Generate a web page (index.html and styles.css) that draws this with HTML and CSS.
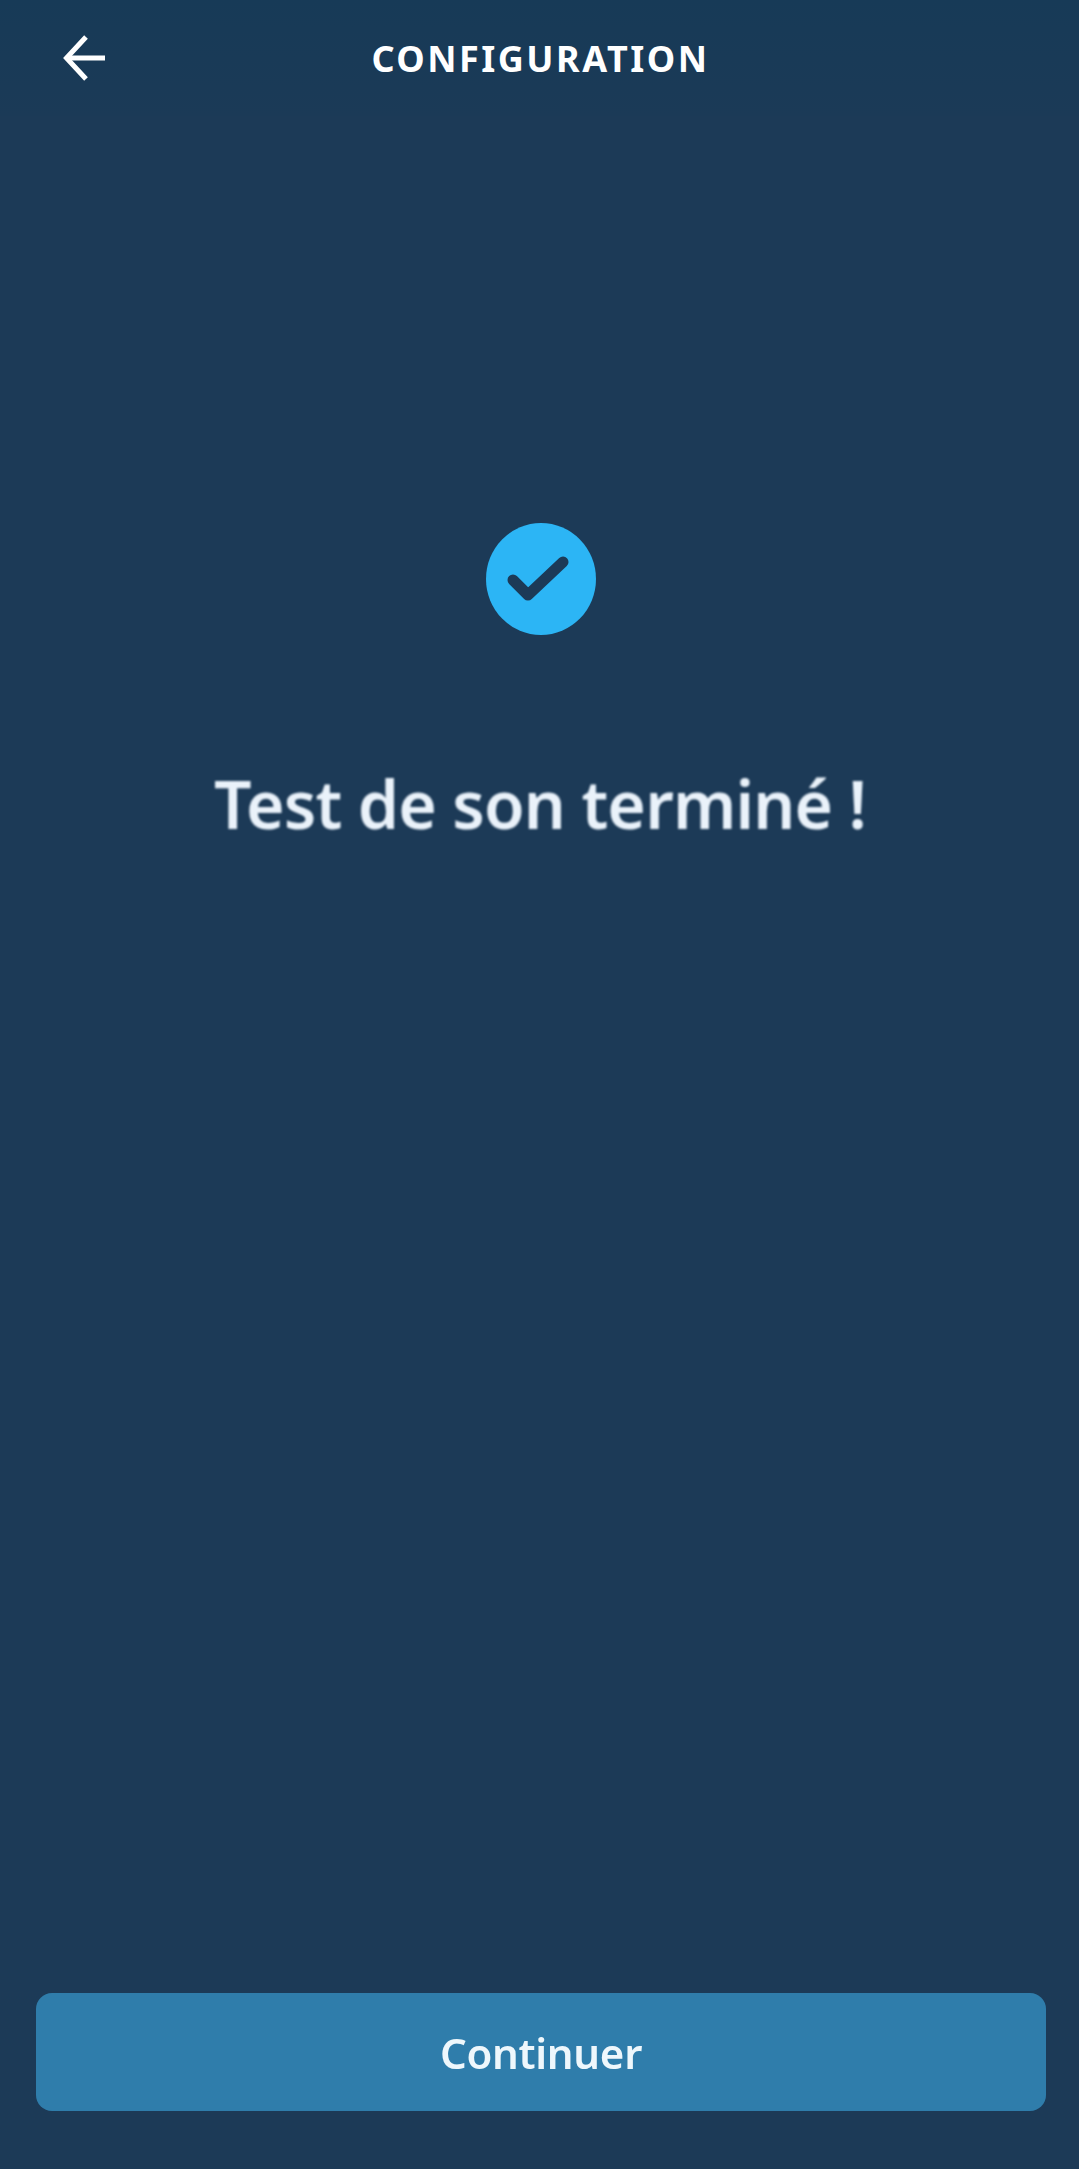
FILE: index.html
```html
<!DOCTYPE html>
<html lang="fr">
<head>
    <meta charset="UTF-8">
    <meta name="viewport" content="width=device-width, initial-scale=1.0">
    <title>Configuration</title>
    <link rel="stylesheet" href="styles.css">
</head>
<body>
    <div class="screen">
        <header class="top-bar">
            <button class="back-button" aria-label="Retour">
                <svg width="46" height="46" viewBox="0 0 46 46" fill="none" stroke="#ffffff" stroke-width="5">
                    <path d="M43 23H6"/>
                    <path d="M24 2L4.5 23L24 44"/>
                </svg>
            </button>
            <h1 class="top-title">CONFIGURATION</h1>
        </header>

        <main class="content">
            <div class="check-circle">
                <svg width="80" height="70" viewBox="0 0 80 70" fill="none" stroke="#1c3a57" stroke-width="11" stroke-linecap="round" stroke-linejoin="round">
                    <path d="M12 36L27 51L62 18"/>
                </svg>
            </div>
            <h2 class="result-title">Test de son terminé !</h2>
        </main>

        <footer class="actions">
            <button class="continue-button"><span class="continue-label">Continuer</span></button>
        </footer>
    </div>
</body>
</html>
```

FILE: styles.css
```css
* {
    box-sizing: border-box;
}

body {
    margin: 0;
    padding: 0;
    background-color: #1c3a57;
    font-family: "Noto Sans", "Open Sans", sans-serif;
    color: #ffffff;
}

.screen {
    display: flex;
    flex-direction: column;
    height: 100vh;
}

.top-bar {
    display: flex;
    justify-content: center;
    align-items: center;
    position: relative;
    height: 116px;
    background: linear-gradient(#173a57, #1b3a57);
}

.back-button {
    position: absolute;
    left: 62px;
    top: 35px;
    display: flex;
    padding: 0;
    border: none;
    background: none;
}

.top-title {
    margin: 0 0 0 2px;
    font-size: 36px;
    font-weight: 700;
    letter-spacing: 2.5px;
}

.content {
    flex: 1;
    display: flex;
    flex-direction: column;
    align-items: center;
    padding-top: 407px;
}

.check-circle {
    display: flex;
    justify-content: center;
    align-items: center;
    width: 110px;
    height: 112px;
    margin-left: 3px;
    border-radius: 50%;
    background-color: #2cb5f5;
    filter: blur(0.6px);
}

.result-title {
    margin: 122px 0 0 1px;
    font-size: 66px;
    line-height: 92px;
    font-weight: 600;
    letter-spacing: -0.85px;
    color: #eaf2fa;
    filter: blur(0.8px);
}

.actions {
    padding: 0 33px 58px 36px;
}

.continue-button {
    display: block;
    width: 100%;
    height: 118px;
    border: none;
    border-radius: 16px;
    background-color: #2f7dab;
    color: #eef7fc;
    font-family: "Noto Sans", "Open Sans", sans-serif;
    font-size: 42px;
    font-weight: 600;
    letter-spacing: -0.3px;
}

.continue-label {
    display: inline-block;
    filter: blur(0.6px);
}
```
